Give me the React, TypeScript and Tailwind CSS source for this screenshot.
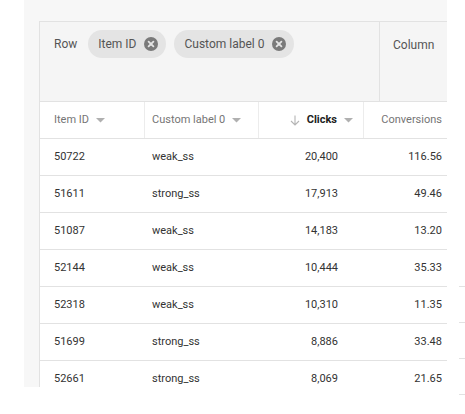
import React from "react";

const rows = [
  { id: "50722", label: "weak_ss", clicks: "20,400", conv: "116.56" },
  { id: "51611", label: "strong_ss", clicks: "17,913", conv: "49.46" },
  { id: "51087", label: "weak_ss", clicks: "14,183", conv: "13.20" },
  { id: "52144", label: "weak_ss", clicks: "10,444", conv: "35.33" },
  { id: "52318", label: "weak_ss", clicks: "10,310", conv: "11.35" },
  { id: "51699", label: "strong_ss", clicks: "8,886", conv: "33.48" },
  { id: "52661", label: "strong_ss", clicks: "8,069", conv: "21.65" },
];

const Caret = () => (
  <svg width="9" height="5" viewBox="0 0 9 5" className="ml-[7px] shrink-0">
    <polygon points="0,0 9,0 4.5,4.5" fill="#b0b0b0" />
  </svg>
);

const Chip = ({ text }: { text: string }) => (
  <div className="flex items-center h-[28px] rounded-full bg-[#e4e4e4] pl-[10px] pr-[8px] gap-[8px] text-[12px] text-[#555]">
    <span>{text}</span>
    <svg width="14" height="14" viewBox="0 0 14 14">
      <circle cx="7" cy="7" r="7" fill="#7a7a7a" />
      <path d="M4.6 4.6 L9.4 9.4 M9.4 4.6 L4.6 9.4" stroke="#e4e4e4" strokeWidth="1.8" strokeLinecap="round" />
    </svg>
  </div>
);

export default function App() {
  return (
    <div
      className="w-[465px] h-[414px] bg-white flex overflow-hidden"
      style={{ fontFamily: "Roboto, 'Liberation Sans', sans-serif" }}
    >
      <div className="ml-[24px] w-[423px] h-[387px] bg-[#f7f7f7] pt-[21px] pl-[15px] overflow-hidden shrink-0">
        <div className="w-[408px] border-l border-t border-[#e2e2e2] bg-white">
          <div className="flex h-[80px] bg-[#f5f5f5] border-b border-[#e2e2e2]">
            <div className="w-[340px] border-r border-[#e2e2e2] flex items-start pt-[8px] pl-[14px]">
              <div className="flex items-center gap-[8px]">
                <span className="text-[12px] text-[#555] mr-[3px]">Row</span>
                <Chip text="Item ID" />
                <Chip text="Custom label 0" />
              </div>
            </div>
            <div className="flex-1 pl-[13px] pt-[14px] text-[12px] text-[#555]">Column</div>
          </div>
          <div className="flex h-[37px] items-center text-[11px] text-[#757575] border-b border-[#e2e2e2]">
            <div className="w-[105px] h-full flex items-center pl-[14px] border-r border-[#ececec]">
              Item ID
              <Caret />
            </div>
            <div className="w-[114px] h-full flex items-center pl-[7px] border-r border-[#ececec]">
              Custom label 0
              <Caret />
            </div>
            <div className="w-[105px] h-full flex items-center justify-end pr-[10px] border-r border-[#ececec]">
              <svg width="10" height="11" viewBox="0 0 10 11" className="mr-[7px]">
                <path d="M5 0.5 V10 M1 6 L5 10 L9 6" stroke="#b5b5b5" strokeWidth="1.1" fill="none" />
              </svg>
              <span className="font-bold text-[#222]">Clicks</span>
              <Caret />
            </div>
            <div className="flex-1 h-full flex items-center justify-end pr-[5px]">Conversions</div>
          </div>
          {rows.map((r) => (
            <div key={r.id} className="flex h-[37px] items-center text-[11px] text-[#333] border-b border-[#e2e2e2]">
              <div className="w-[105px] pl-[14px]">{r.id}</div>
              <div className="w-[114px] pl-[7px]">{r.label}</div>
              <div className="w-[105px] text-right pr-[26px]">{r.clicks}</div>
              <div className="flex-1 text-right pr-[5px]">{r.conv}</div>
            </div>
          ))}
        </div>
      </div>
      <div className="ml-[12px] w-[6px] flex flex-col">
        <div className="h-[287px] border-b border-[#e2e2e2]" />
        <div className="h-[36px] border-b border-[#e2e2e2]" />
        <div className="h-[36px] border-b border-[#e2e2e2]" />
        <div className="h-[36px] border-b border-[#e2e2e2]" />
      </div>
    </div>
  );
}
